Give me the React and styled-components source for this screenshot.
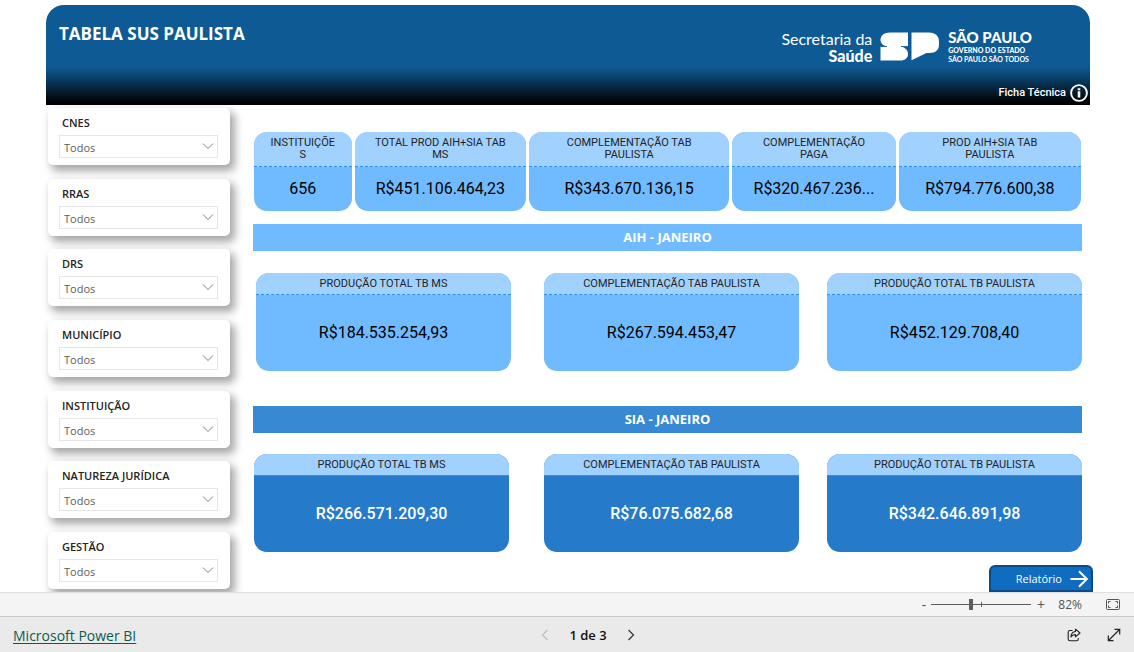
import React, { useState } from 'react';
import styled, { createGlobalStyle } from 'styled-components';

const filters = ['CNES', 'RRAS', 'DRS', 'MUNICÍPIO', 'INSTITUIÇÃO', 'NATUREZA JURÍDICA', 'GESTÃO'];

const totals = [
  { title: 'INSTITUIÇÕES', value: '656' },
  { title: 'TOTAL PROD AIH+SIA TAB MS', value: 'R$451.106.464,23' },
  { title: 'COMPLEMENTAÇÃO TAB PAULISTA', value: 'R$343.670.136,15' },
  { title: 'COMPLEMENTAÇÃO PAGA', value: 'R$320.467.236...' },
  { title: 'PROD AIH+SIA TAB PAULISTA', value: 'R$794.776.600,38' },
];

const aih = [
  { title: 'PRODUÇÃO TOTAL TB MS', value: 'R$184.535.254,93' },
  { title: 'COMPLEMENTAÇÃO TAB PAULISTA', value: 'R$267.594.453,47' },
  { title: 'PRODUÇÃO TOTAL TB PAULISTA', value: 'R$452.129.708,40' },
];

const sia = [
  { title: 'PRODUÇÃO TOTAL TB MS', value: 'R$266.571.209,30' },
  { title: 'COMPLEMENTAÇÃO TAB PAULISTA', value: 'R$76.075.682,68' },
  { title: 'PRODUÇÃO TOTAL TB PAULISTA', value: 'R$342.646.891,98' },
];

const Filter = ({ name }) => {
  const id = 'filter-' + name.toLowerCase().replace(' ', '-');
  return (
    <FilterCard>
      <FilterLabel htmlFor={id}>{name}</FilterLabel>
      <SelectBox>
        <Select id={id} defaultValue="todos">
          <option value="todos">Todos</option>
        </Select>
        <Chevron width="12" height="8" viewBox="0 0 12 8" aria-hidden="true">
          <path d="M1 1.5 L6 6.5 L11 1.5" />
        </Chevron>
      </SelectBox>
    </FilterCard>
  );
};

const Kpi = ({ title, value, dark, small }) => (
  <Card $dark={dark}>
    <CardTitle $dark={dark} $small={small}>{title}</CardTitle>
    <CardValue $dark={dark}>{value}</CardValue>
  </Card>
);

const App = () => {
  const [zoom, setZoom] = useState(40);

  return (
    <Page>
      <GlobalStyle />
      <Report>
        <Header>
          <HeaderTop>
            <Title>TABELA SUS PAULISTA</Title>
            <Brand>
              <Department>
                <span>Secretaria da</span>
                <b>Saúde</b>
              </Department>
              <svg width="60" height="29" viewBox="0 0 60 29" fill="#fff" aria-hidden="true">
                <path d="M10 0.5 H28 V14.5 H21 C25.500 15.500 28 18.500 28 22 C28 26 25 28.500 20.500 28.500 H0.500 V14.500 H7 C3 13.500 0.500 11.500 0.500 8 C0.500 3.500 4 0.500 10 0.500 Z" />
                <path d="M0.500 14.500 H7 M21 14.500 H28" stroke="#0e5a94" strokeWidth="0.8" />
                <path d="M31.500 0.500 H49 C55.500 0.500 59 4 59 9.500 V12.500 C59 18 55.500 21 50 21 H46.500 L31.500 28.200 Z" />
              </svg>
              <State>
                <StateName>SÃO PAULO</StateName>
                <StateLine $heavy>GOVERNO DO ESTADO</StateLine>
                <StateLine>SÃO PAULO SÃO TODOS</StateLine>
              </State>
            </Brand>
          </HeaderTop>
          <InfoButton type="button">
            Ficha Técnica
            <svg width="18" height="18" viewBox="0 0 18 18" fill="none" stroke="#fff" aria-hidden="true">
              <circle cx="9" cy="9" r="7.900" strokeWidth="1.900" />
              <path d="M9 4.200 V6.200 M9 7.300 V13.500" strokeWidth="2.600" />
            </svg>
          </InfoButton>
        </Header>

        <Body>
          <Sidebar>
            {filters.map((name) => (
              <Filter key={name} name={name} />
            ))}
          </Sidebar>
          <Main>
            <TotalsRow>
              {totals.map((item) => (
                <Kpi key={item.title} {...item} small />
              ))}
            </TotalsRow>
            <Banner>AIH - JANEIRO</Banner>
            <GroupRow $lead={3}>
              {aih.map((item) => (
                <Kpi key={item.title} {...item} />
              ))}
            </GroupRow>
            <Banner $dark>SIA - JANEIRO</Banner>
            <GroupRow $lead={1}>
              {sia.map((item) => (
                <Kpi key={item.title} {...item} dark />
              ))}
            </GroupRow>
            <ReportButton type="button">
              Relatório
              <svg width="18" height="18" viewBox="0 0 18 18" fill="none" stroke="#fff" strokeWidth="2" aria-hidden="true">
                <path d="M0.500 9 H16.500 M9 1.200 L16.800 9 L9 16.800" />
              </svg>
            </ReportButton>
          </Main>
        </Body>
      </Report>

      <ZoomBar>
        <ZoomButton type="button" aria-label="Reduzir" onClick={() => setZoom(Math.max(0, zoom - 5))}>
          -
        </ZoomButton>
        <SliderBox>
          <Slider
            type="range"
            min="0"
            max="100"
            value={zoom}
            aria-label="Zoom"
            onChange={(e) => setZoom(Number(e.target.value))}
          />
        </SliderBox>
        <ZoomButton type="button" aria-label="Ampliar" onClick={() => setZoom(Math.min(100, zoom + 5))}>
          +
        </ZoomButton>
        <ZoomValue>82%</ZoomValue>
        <IconButton type="button" aria-label="Ajustar à página">
          <svg width="14" height="11" viewBox="0 0 14 11" fill="none" stroke="#555" aria-hidden="true">
            <rect x="0.500" y="0.500" width="13" height="10" rx="1" />
            <path d="M2.500 4.500 V2.500 H4.500 M9.500 2.500 H11.500 V4.500 M11.500 6.500 V8.500 H9.500 M4.500 8.500 H2.500 V6.500" />
          </svg>
        </IconButton>
      </ZoomBar>

      <Footer>
        <FooterLink href="#powerbi">Microsoft Power BI</FooterLink>
        <Pager>
          <IconButton type="button" aria-label="Página anterior" disabled>
            <svg width="8" height="12" viewBox="0 0 8 12" fill="none" stroke="#bdbdbd" strokeWidth="1.200" aria-hidden="true">
              <path d="M6.500 1 L1.500 6 L6.500 11" />
            </svg>
          </IconButton>
          <span>1 de 3</span>
          <IconButton type="button" aria-label="Próxima página">
            <svg width="8" height="12" viewBox="0 0 8 12" fill="none" stroke="#333" strokeWidth="1.200" aria-hidden="true">
              <path d="M1.500 1 L6.500 6 L1.500 11" />
            </svg>
          </IconButton>
        </Pager>
        <Actions>
          <IconButton type="button" aria-label="Compartilhar">
            <svg width="14" height="14" viewBox="0 0 14 14" fill="none" stroke="#222" strokeWidth="1.100" strokeLinejoin="round" aria-hidden="true">
              <path d="M5.500 2.500 H3 C1.900 2.500 1.200 3.200 1.200 4.200 V11 C1.200 12.100 1.900 12.800 3 12.800 H9.500 C10.600 12.800 11.300 12.100 11.300 11 V10" />
              <path d="M8.500 1.200 L13 5 L8.500 8.800 V6.600 C6.500 6.500 5 7.300 3.900 9 C4.100 5.900 5.800 3.800 8.500 3.500 Z" />
            </svg>
          </IconButton>
          <IconButton type="button" aria-label="Tela inteira">
            <svg width="14" height="14" viewBox="0 0 14 14" fill="none" stroke="#222" strokeWidth="1.200" aria-hidden="true">
              <path d="M1.500 12.500 L12.500 1.500 M7.500 1.300 H12.700 V6.500 M1.300 7.500 V12.700 H6.500" />
            </svg>
          </IconButton>
        </Actions>
      </Footer>
    </Page>
  );
};

const GlobalStyle = createGlobalStyle`
  * {
    box-sizing: border-box;
  }

  body {
    margin: 0;
    background: #fff;
    font-family: 'Open Sans', 'Noto Sans', sans-serif;
  }

  button {
    padding: 0;
    border: none;
    background: none;
    color: inherit;
    font: inherit;
    cursor: pointer;
  }
`;

const Page = styled.div`
  display: flex;
  flex-direction: column;
  min-height: 100vh;
`;

const Report = styled.div`
  flex: 1;
  padding: 5px 44px 0 46px;
`;

const Header = styled.header`
  display: flex;
  flex-direction: column;
  justify-content: space-between;
  height: 100px;
  padding: 17px 2px 3px 13px;
  border-radius: 18px 18px 0 0;
  background: linear-gradient(#0e5a94 62%, #000 98%);
  color: #fff;
`;

const HeaderTop = styled.div`
  display: flex;
  justify-content: space-between;
  align-items: flex-start;
  padding-right: 56px;
`;

const Title = styled.h1`
  margin: 0;
  font-size: 17px;
  line-height: 24px;
  font-weight: 700;
`;

const Brand = styled.div`
  display: flex;
  align-items: center;
  gap: 8px;
  padding-top: 7px;
  font-family: Lato, sans-serif;
`;

const Department = styled.div`
  display: flex;
  flex-direction: column;
  font-size: 16px;
  line-height: 17px;
  text-align: right;

  b {
    font-weight: 900;
  }
`;

const State = styled.div`
  display: flex;
  flex-direction: column;
  white-space: nowrap;
`;

const StateName = styled.span`
  font-size: 15px;
  line-height: 17px;
  font-weight: 900;
`;

const StateLine = styled.span`
  font-size: 7px;
  line-height: 9px;
  font-weight: ${(p) => (p.$heavy ? 900 : 700)};
`;

const InfoButton = styled.button`
  display: flex;
  align-items: center;
  align-self: flex-end;
  gap: 4px;
  font-family: Roboto, sans-serif;
  font-size: 11px;
  line-height: 18px;
  font-weight: 500;
`;

const Body = styled.div`
  display: flex;
  gap: 23px;
  padding: 0 0 0 2px;
`;

const Sidebar = styled.aside`
  display: flex;
  flex: 0 0 182px;
  flex-direction: column;
  justify-content: space-between;
  padding: 3px 0;
`;

const FilterCard = styled.div`
  height: 57px;
  padding: 7px 12px 0 11px;
  border-radius: 5px;
  background: #fff;
  box-shadow: 4px 5px 9px 1px rgba(0, 0, 0, 0.35);
`;

const FilterLabel = styled.label`
  display: block;
  padding-left: 3px;
  color: #252423;
  font-size: 11px;
  line-height: 16px;
  font-weight: 600;
`;

const SelectBox = styled.div`
  position: relative;
  margin-top: 4px;
`;

const Select = styled.select`
  display: block;
  width: 100%;
  height: 23px;
  padding: 2px 4px 0;
  appearance: none;
  border: 1px solid #e6e6e6;
  border-radius: 0;
  background: #fff;
  color: #605e5c;
  font-family: inherit;
  font-size: 11px;
`;

const Chevron = styled.svg`
  position: absolute;
  top: 7px;
  right: 4px;
  fill: none;
  stroke: #7a7f88;
  pointer-events: none;
`;

const Main = styled.main`
  display: flex;
  flex: 1;
  flex-direction: column;
  min-width: 0;
  padding-top: 27px;
`;

const TotalsRow = styled.div`
  display: grid;
  grid-template-columns: 98fr 172fr 201fr 164fr 183fr;
  gap: 3px;
  height: 79px;
  margin: 0 9px 13px 1px;
`;

const GroupRow = styled.div`
  display: grid;
  grid-template-columns: ${(p) => 263 - p.$lead}fr 255fr 255fr;
  gap: 28px;
  height: 98px;
  margin-right: 8px;
  padding-left: ${(p) => p.$lead}px;

  & > :first-child {
    margin-right: ${(p) => 8 - p.$lead}px;
  }
`;

const Banner = styled.h2`
  margin: ${(p) => (p.$dark ? '35px 8px 21px 0' : '0 8px 22px 0')};
  background: ${(p) => (p.$dark ? '#3889d3' : '#70baff')};
  color: #fff;
  font-size: 13px;
  line-height: 27px;
  font-weight: 700;
  text-align: center;
`;

const Card = styled.section`
  display: flex;
  flex-direction: column;
  min-width: 0;
  overflow: hidden;
  border-radius: 13px;
  background: ${(p) => (p.$dark ? '#257bc9' : '#70baff')};
  font-family: Roboto, sans-serif;
  text-align: center;
`;

const CardTitle = styled.h3`
  height: ${(p) => (p.$small ? 35 : 22)}px;
  margin: 0;
  padding: 5px max(16px, 11%) 0;
  border-bottom: 1px ${(p) => (p.$dark ? 'solid' : 'dashed')} #2492f5;
  background: #a0d1ff;
  color: #252423;
  font-size: 11px;
  line-height: 12px;
  font-weight: 400;
  overflow-wrap: anywhere;
`;

const CardValue = styled.p`
  margin: auto 0;
  color: ${(p) => (p.$dark ? '#fff' : '#000')};
  font-size: 16px;
  line-height: 20px;
  font-weight: ${(p) => (p.$dark ? 500 : 400)};
`;

const ReportButton = styled.button`
  display: flex;
  align-items: center;
  align-self: flex-end;
  justify-content: flex-end;
  gap: 8px;
  width: 104px;
  height: 27px;
  margin: 13px -3px 0 0;
  padding-right: 3px;
  border: 2px solid #0b4a86;
  border-radius: 6px 6px 0 0;
  background: #0f6cc0;
  color: #fff;
  font-size: 11px;
`;

const ZoomBar = styled.div`
  display: flex;
  align-items: center;
  justify-content: flex-end;
  height: 24px;
  padding-right: 14px;
  border-top: 1px solid #e0e0e0;
  background: #f4f4f4;
  color: #555;
`;

const ZoomButton = styled.button`
  width: 14px;
  font-size: 14px;
  line-height: 20px;
`;

const SliderBox = styled.div`
  display: flex;
  align-items: center;
  width: 100px;
  height: 12px;
  margin: 0 3px 0 0;
  background:
    linear-gradient(#605e5c, #605e5c) 50px 50% / 1px 5px no-repeat,
    linear-gradient(#605e5c, #605e5c) 0 50% / 100% 1px no-repeat;
`;

const Slider = styled.input`
  width: 100%;
  height: 12px;
  margin: 0;
  appearance: none;
  background: transparent;

  &::-webkit-slider-thumb {
    width: 4px;
    height: 11px;
    appearance: none;
    background: #605e5c;
  }
`;

const ZoomValue = styled.span`
  width: 34px;
  margin-right: 24px;
  font-size: 12px;
  text-align: right;
`;

const IconButton = styled.button`
  display: flex;
`;

const Footer = styled.footer`
  display: grid;
  grid-template-columns: 1fr auto 1fr;
  align-items: center;
  height: 37px;
  padding: 0 13px;
  border-top: 1px solid #c8c8c8;
  background: #eaeaea;
  font-size: 13px;
`;

const FooterLink = styled.a`
  justify-self: start;
  color: #0b5c50;
  font-size: 14px;
  text-underline-offset: 2px;
`;

const Pager = styled.div`
  display: flex;
  align-items: center;
  gap: 20px;
  margin-left: 42px;
  color: #111;
  font-weight: 600;
`;

const Actions = styled.div`
  display: flex;
  justify-self: end;
  gap: 26px;
`;

export default App;
